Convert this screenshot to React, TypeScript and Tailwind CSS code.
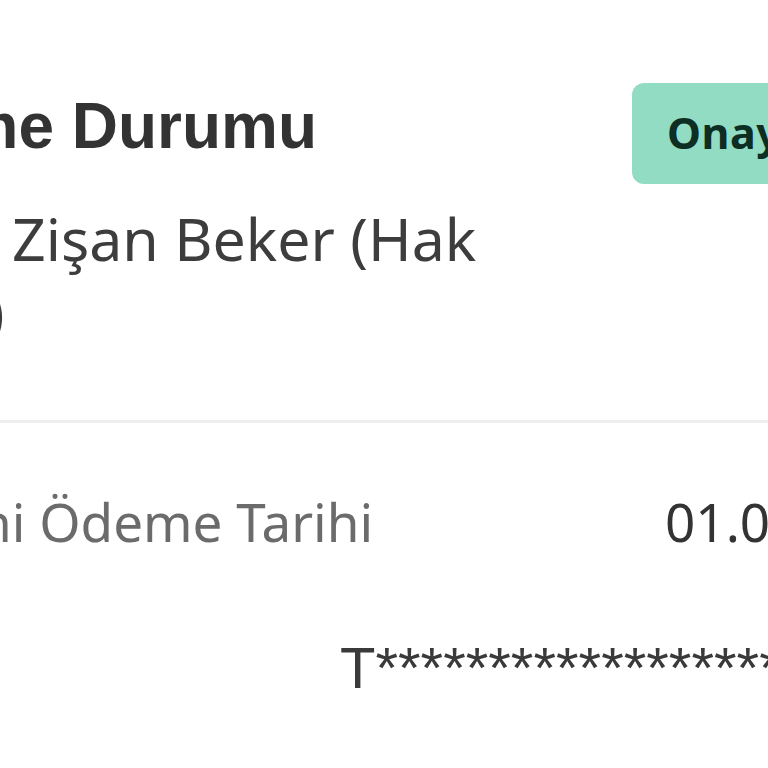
import React from "react";

export default function App() {
  return (
    <div className="w-[768px] h-[768px] overflow-hidden bg-white relative">
      <div className="flex flex-col">
        {/* Header row */}
        <div className="flex items-center pt-[83px] ml-[-163px]">
          <div
            className="w-[795px] shrink-0 text-[64px] font-bold text-[#333333] leading-none whitespace-nowrap mt-[-16px]"
            style={{ fontFamily: "'Liberation Sans', Arial, sans-serif" }}
          >
            Ödeme Durumu
          </div>
          <div
            className="shrink-0 h-[101px] rounded-[12px] bg-[#92dcc4] flex items-center pl-[35px] pr-[40px] text-[43px] font-bold tracking-[0.5px] text-[#0d2e23] whitespace-nowrap"
            style={{ fontFamily: "'Noto Sans', sans-serif" }}
          >
            Onaylandı
          </div>
        </div>
        {/* Name */}
        <div
          className="ml-[-182px] mt-[18px] text-[59px] leading-[73px] text-[#3d3d3d] whitespace-nowrap"
          style={{ fontFamily: "'Noto Sans', sans-serif" }}
        >
          <div>
            <span className="inline-block w-[194px]">Alıcı:</span>Zişan Beker (Hak
          </div>
          <div>Sahibi)</div>
        </div>
        {/* Divider */}
        <div className="mt-[72px] h-[3px] bg-[#eeeeee] w-full" />
        {/* Date row */}
        <div
          className="flex items-center mt-[67px] ml-[-172px] text-[53px] leading-[64px] whitespace-nowrap"
          style={{ fontFamily: "'Noto Sans', sans-serif" }}
        >
          <div className="w-[837px] shrink-0 text-[#6b6b6b]">Tahmini Ödeme Tarihi</div>
          <div className="shrink-0 text-[#333333]">01.03.2024</div>
        </div>
        {/* IBAN row */}
        <div
          className="mt-[85px] pl-[340px] text-[58px] leading-none text-[#3a3a3a] whitespace-nowrap"
          style={{ fontFamily: "'Liberation Sans', Arial, sans-serif" }}
        >
          T************************
        </div>
      </div>
    </div>
  );
}
